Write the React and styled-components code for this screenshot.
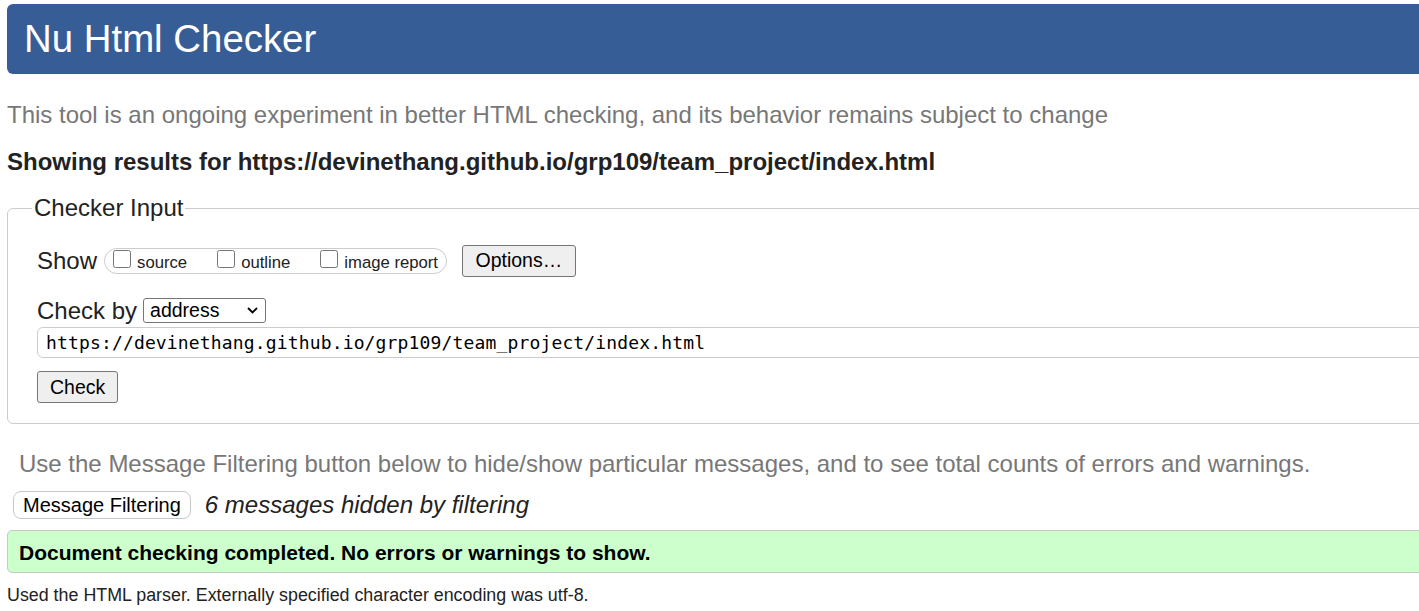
import React from "react";
import styled, { createGlobalStyle } from "styled-components";

const Global = createGlobalStyle`
  html, body {
    margin: 0;
    padding: 0;
    overflow: hidden;
    background: #fff;
  }
  body {
    font-family: "Liberation Sans", Arial, sans-serif;
    color: #222;
  }
`;

const Page = styled.div`
  width: 1460px;
  padding: 4px 0 0 7px;
  box-sizing: border-box;
`;

const Header = styled.header`
  height: 70px;
  background: #375d96;
  border-radius: 6px;
  display: flex;
  align-items: center;
  padding-left: 17px;
`;

const Title = styled.h1`
  margin: 0;
  font-size: 38.4px;
  font-weight: normal;
  color: #fff;
`;

const Tagline = styled.p`
  margin: ${(p) => p.$top || 0}px 0 0 ${(p) => p.$left || 0}px;
  font-size: 24px;
  line-height: 28px;
  color: #777;
`;

const Results = styled.h2`
  margin: 19px 0 0;
  font-size: 24px;
  line-height: 28px;
  font-weight: bold;
  color: #222;
`;

const Fieldset = styled.fieldset`
  margin: 18px 0 0;
  border: 1px solid #ccc;
  border-radius: 6px;
  padding: 0 0 20px 29px;
  min-width: 0;
`;

const Legend = styled.legend`
  font-size: 24px;
  line-height: 28px;
  padding: 0 2px;
  margin-left: -5px;
  color: #222;
`;

const Row = styled.div`
  display: flex;
  align-items: center;
  height: ${(p) => p.$h}px;
  margin-top: ${(p) => p.$top}px;
`;

const RowLabel = styled.span`
  font-size: 24px;
  line-height: 28px;
  margin-right: ${(p) => p.$gap}px;
`;

const Pill = styled.div`
  display: flex;
  align-items: center;
  height: 26px;
  box-sizing: border-box;
  border: 1px solid #ccc;
  border-radius: 13px;
  padding: 0 8px;
  gap: 30px;
`;

const Option = styled.label`
  display: inline-flex;
  align-items: baseline;
  gap: 6px;
  font-size: 16.7px;
  line-height: 19px;
  color: #222;
`;

const Box = styled.input`
  width: 18px;
  height: 18px;
  margin: 0 0 2px 0;
`;

const Button = styled.button`
  font-family: "Liberation Sans", Arial, sans-serif;
  font-size: ${(p) => p.$size || 20}px;
  color: #000;
  height: ${(p) => p.$h}px;
  padding: 0 ${(p) => p.$pad}px;
  background: ${(p) => (p.$light ? "#fff" : "#efefef")};
  border: 1px solid ${(p) => (p.$light ? "#c8c8c8" : "#767676")};
  border-radius: ${(p) => (p.$light ? 8 : 3)}px;
  margin-left: ${(p) => p.$ml || 0}px;
  box-sizing: border-box;
`;

const Select = styled.div`
  display: flex;
  align-items: center;
  justify-content: space-between;
  width: 123px;
  height: 25px;
  box-sizing: border-box;
  border: 1px solid #767676;
  border-radius: 3px;
  padding: 0 7px 0 6px;
  font-size: 19.5px;
  color: #000;
`;

const UrlInput = styled.input`
  display: block;
  width: 100%;
  height: 31px;
  box-sizing: border-box;
  margin-top: 2px;
  border: 1px solid #ccc;
  border-radius: 6px;
  padding: 0 8px;
  font-family: "DejaVu Sans Mono", monospace;
  font-size: 18px;
  letter-spacing: 0.15px;
  color: #000;
  outline: none;
`;

const CheckWrap = styled.div`
  margin-top: 13px;
`;

const Hidden = styled.span`
  font-size: 24px;
  font-style: italic;
  color: #222;
  margin-left: 14px;
`;

const Success = styled.div`
  margin-top: 11px;
  height: 43px;
  box-sizing: border-box;
  background: #ccffcc;
  border: 1px solid #c8c8c8;
  border-radius: 5px;
  display: flex;
  align-items: center;
  padding: 2px 0 0 11px;
  font-size: 21px;
  font-weight: bold;
  color: #000;
`;

const Footer = styled.p`
  margin: 12px 0 0;
  font-size: 17.85px;
  line-height: 21px;
  color: #222;
`;

const Chevron = () => (
  <svg width="11" height="7" viewBox="0 0 11 7" aria-hidden="true">
    <path d="M1 1l4.5 4.5L10 1" fill="none" stroke="#000" strokeWidth="1.8" />
  </svg>
);

export default function App() {
  const url = "https://devinethang.github.io/grp109/team_project/index.html";
  return (
    <Page>
      <Global />
      <Header>
        <Title>Nu Html Checker</Title>
      </Header>
      <Tagline $top={27}>
        This tool is an ongoing experiment in better HTML checking, and its behavior remains subject to change
      </Tagline>
      <Results>Showing results for {url}</Results>
      <Fieldset>
        <Legend>Checker Input</Legend>
        <Row $h={31} $top={23}>
          <RowLabel $gap={7}>Show</RowLabel>
          <Pill>
            <Option>
              <Box type="checkbox" />
              source
            </Option>
            <Option>
              <Box type="checkbox" />
              outline
            </Option>
            <Option>
              <Box type="checkbox" />
              image report
            </Option>
          </Pill>
          <Button $h={32} $pad={12.5} $ml={15} $size={19.5}>
            Options…
          </Button>
        </Row>
        <Row $h={29} $top={20}>
          <RowLabel $gap={6}>Check by</RowLabel>
          <Select role="combobox">
            <span>address</span>
            <Chevron />
          </Select>
        </Row>
        <UrlInput defaultValue={url} />
        <CheckWrap>
          <Button $h={32} $pad={12} $size={19.5}>
            Check
          </Button>
        </CheckWrap>
      </Fieldset>
      <Tagline $top={26} $left={12}>
        Use the Message Filtering button below to hide/show particular messages, and to see total counts of errors and warnings.
      </Tagline>
      <Row $h={28} $top={13}>
        <Button $light $h={28} $pad={9} $ml={6}>
          Message Filtering
        </Button>
        <Hidden>6 messages hidden by filtering</Hidden>
      </Row>
      <Success>Document checking completed. No errors or warnings to show.</Success>
      <Footer>Used the HTML parser. Externally specified character encoding was utf-8.</Footer>
    </Page>
  );
}
